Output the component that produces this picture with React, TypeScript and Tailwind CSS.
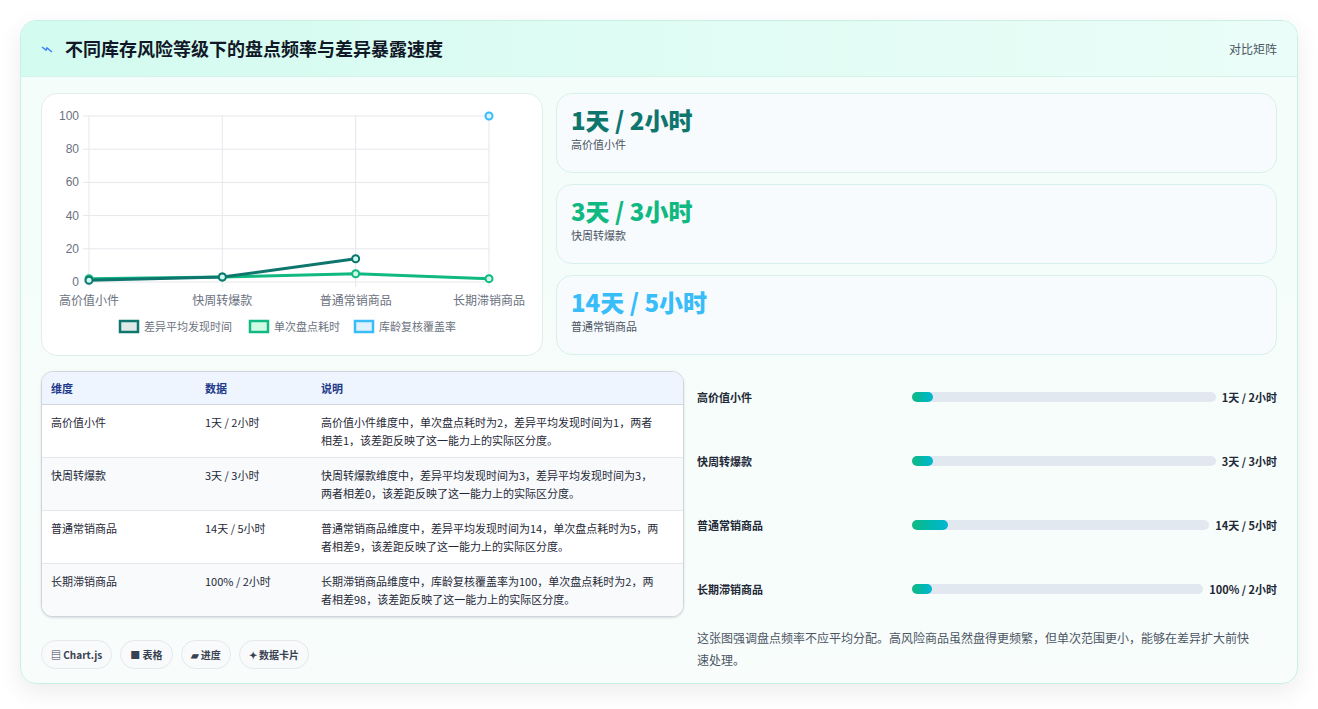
import React from "react";

const font = { fontFamily: '"Noto Sans CJK SC", "Noto Sans", sans-serif' };

function Chart() {
  const x0 = 47, x1 = 447, yTop = 22, yBot = 188;
  const xs = [0, 1, 2, 3].map((i) => x0 + ((x1 - x0) * i) / 3);
  const y = (v: number) => yBot - ((yBot - yTop) * v) / 100;
  const dark = [1, 3, 14];
  const green = [2, 3, 5, 2];
  return (
    <svg width="500" height="260" viewBox="0 0 500 260">
      {[0, 20, 40, 60, 80, 100].map((v) => (
        <g key={v}>
          <line x1={x0 - 6} x2={x1} y1={y(v)} y2={y(v)} stroke="#e5e7eb" />
          <text x={x0 - 10} y={y(v) + 4} textAnchor="end" fontSize="12" fill="#6b7280" style={{ fontFamily: '"Liberation Sans", sans-serif' }}>{v}</text>
        </g>
      ))}
      {xs.map((x, i) => (
        <line key={i} x1={x} x2={x} y1={yTop} y2={yBot + 5} stroke="#e5e7eb" />
      ))}
      {["高价值小件", "快周转爆款", "普通常销商品", "长期滞销商品"].map((t, i) => (
        <text key={t} x={xs[i]} y={yBot + 23} textAnchor="middle" fontSize="12" fill="#6b7280">{t}</text>
      ))}
      <polyline points={green.map((v, i) => `${xs[i]},${y(v)}`).join(" ")} fill="none" stroke="#10b981" strokeWidth="3" />
      <polyline points={dark.map((v, i) => `${xs[i]},${y(v)}`).join(" ")} fill="none" stroke="#0f766e" strokeWidth="3" />
      {green.map((v, i) => <circle key={i} cx={xs[i]} cy={y(v)} r="3.5" fill="#d1fae5" stroke="#10b981" strokeWidth="2" />)}
      {dark.map((v, i) => <circle key={i} cx={xs[i]} cy={y(v)} r="3.5" fill="#ccfbf1" stroke="#0f766e" strokeWidth="2" />)}
      <circle cx={xs[3]} cy={y(100)} r="3.5" fill="#e0f2fe" stroke="#38bdf8" strokeWidth="2" />
      {[
        { x: 78, c: "#0f766e", f: "#dfe9e8", t: "差异平均发现时间" },
        { x: 208, c: "#10b981", f: "#d1fae5", t: "单次盘点耗时" },
        { x: 313, c: "#38bdf8", f: "#e0f2fe", t: "库龄复核覆盖率" },
      ].map((l) => (
        <g key={l.t}>
          <rect x={l.x} y={227} width="18" height="11" fill={l.f} stroke={l.c} strokeWidth="2.5" />
          <text x={l.x + 24} y={237} fontSize="11" fill="#6b7280">{l.t}</text>
        </g>
      ))}
    </svg>
  );
}

const rows = [
  ["高价值小件", "1天 / 2小时", "高价值小件维度中，单次盘点耗时为2，差异平均发现时间为1，两者相差1，该差距反映了这一能力上的实际区分度。", 7],
  ["快周转爆款", "3天 / 3小时", "快周转爆款维度中，差异平均发现时间为3，差异平均发现时间为3，两者相差0，该差距反映了这一能力上的实际区分度。", 7],
  ["普通常销商品", "14天 / 5小时", "普通常销商品维度中，差异平均发现时间为14，单次盘点耗时为5，两者相差9，该差距反映了这一能力上的实际区分度。", 12],
  ["长期滞销商品", "100% / 2小时", "长期滞销商品维度中，库龄复核覆盖率为100，单次盘点耗时为2，两者相差98，该差距反映了这一能力上的实际区分度。", 7],
] as const;

export default function App() {
  return (
    <div className="min-h-[709px] bg-white p-5" style={font}>
      <div className="rounded-2xl border border-[#c9f0e4] bg-gradient-to-b from-[#f3fdf9] to-[#f8fdfc] shadow-[0_8px_24px_rgba(0,0,0,0.08)] overflow-hidden">
        <div className="flex h-[56px] items-center justify-between border-b border-[#d4f3ea] bg-gradient-to-r from-[#d3fbef] to-[#ebfdf8] px-5">
          <div className="flex items-center gap-3">
            <svg width="12" height="8" viewBox="0 0 12 8"><path d="M1 2 L5 5 L6 3 L11 7" fill="none" stroke="#3b82f6" strokeWidth="1.5" /></svg>
            <span className="text-[18px] font-bold text-[#111827]">不同库存风险等级下的盘点频率与差异暴露速度</span>
          </div>
          <span className="text-[12px] text-[#4b5563]">对比矩阵</span>
        </div>
        <div className="grid grid-cols-[643px_1fr] gap-x-[13px] px-5 pt-4 pb-[12px]">
          <div className="col-span-2 grid grid-cols-[502px_1fr] gap-[13px]">
            <div className="h-[263px] rounded-2xl border border-[#e5ecef] bg-white">
              <Chart />
            </div>
            <div className="flex flex-col gap-[11px]">
              {[
                ["1天 / 2小时", "高价值小件", "text-[#0f766e]"],
                ["3天 / 3小时", "快周转爆款", "text-[#10b981]"],
                ["14天 / 5小时", "普通常销商品", "text-[#38bdf8]"],
              ].map(([v, l, c]) => (
                <div key={l} className="flex h-[80px] flex-col rounded-2xl border border-[#d7f0ea] bg-[#f8fbfe] px-[14px] pt-[10px]">
                  <div className={`text-[24px] font-extrabold leading-[32px] ${c}`}>{v}</div>
                  <div className="text-[11px] text-[#4b5563]">{l}</div>
                </div>
              ))}
            </div>
          </div>
          <div className="mt-[15px]">
            <div className="overflow-hidden rounded-xl border border-[#d1d5db] bg-white shadow-sm">
              <div className="grid h-[33px] grid-cols-[154px_116px_1fr] items-center border-b border-[#d1d5db] bg-[#eef5fe] px-[9px] text-[11px] font-semibold text-[#1e3a8a]">
                <div>维度</div><div>数据</div><div>说明</div>
              </div>
              {rows.map(([a, b, c], i) => (
                <div key={a} className={`grid grid-cols-[154px_116px_1fr] border-b border-[#e5e7eb] px-[9px] py-[8px] text-[11px] leading-[18px] text-[#1f2937] last:border-b-0 ${i % 2 ? "bg-[#f8fafc]" : "bg-white"}`}>
                  <div>{a}</div><div>{b}</div><div className="pr-3">{c}</div>
                </div>
              ))}
            </div>
            <div className="mt-[23px] flex gap-2">
              {["▤ Chart.js", "■ 表格", "▰ 进度", "✦ 数据卡片"].map((t) => (
                <span key={t} className="flex h-[29px] items-center rounded-full border border-[#e5e7eb] bg-[#f9fafb] px-[9px] text-[10px] font-semibold text-[#374151]">{t}</span>
              ))}
            </div>
          </div>
          <div className="mt-[9px] flex flex-col">
            {rows.map(([a, b, _c, w]) => (
              <div key={a} className="flex h-[64px] items-center gap-[6px]">
                <div className="w-[209px] shrink-0 text-[11px] font-semibold text-[#1f2937]">{a}</div>
                <div className="h-[10px] flex-1 rounded-full bg-[#e2e8f0]">
                  <div className="h-full rounded-full bg-gradient-to-r from-[#10b981] to-[#06b6d4]" style={{ width: `${w}%` }} />
                </div>
                <div className="shrink-0 text-[11px] font-bold text-[#1f2937]">{b}</div>
              </div>
            ))}
            <p className="mt-[6px] pr-[20px] text-[12px] leading-[22px] text-[#4b5563]">这张图强调盘点频率不应平均分配。高风险商品虽然盘得更频繁，但单次范围更小，能够在差异扩大前快速处理。</p>
          </div>
        </div>
      </div>
    </div>
  );
}
